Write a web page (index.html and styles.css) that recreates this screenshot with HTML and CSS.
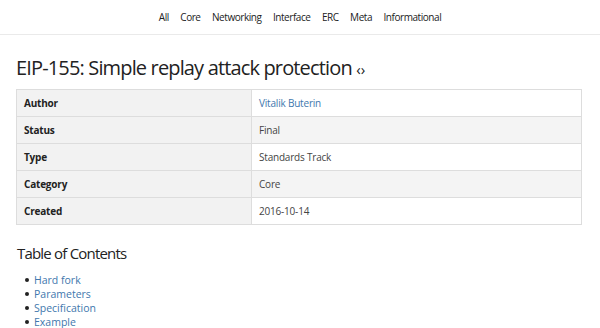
FILE: index.html
```html
<!DOCTYPE html>
<html>
<head>
<meta charset="utf-8">
<link rel="stylesheet" href="styles.css">
</head>
<body>
<header class="topnav">
  <nav class="nav">
    <a href="#">All</a>
    <a href="#">Core</a>
    <a href="#">Networking</a>
    <a href="#">Interface</a>
    <a href="#">ERC</a>
    <a href="#">Meta</a>
    <a href="#">Informational</a>
  </nav>
</header>
<main class="content">
  <h1 class="title">EIP-155: Simple replay attack protection <span class="src">‹›</span></h1>
  <table class="meta">
    <tr><th>Author</th><td><a href="#">Vitalik Buterin</a></td></tr>
    <tr class="odd"><th>Status</th><td>Final</td></tr>
    <tr><th>Type</th><td>Standards Track</td></tr>
    <tr class="odd"><th>Category</th><td>Core</td></tr>
    <tr><th>Created</th><td>2016-10-14</td></tr>
  </table>
  <h2 class="toc-title">Table of Contents</h2>
  <ul class="toc">
    <li><a href="#">Hard fork</a></li>
    <li><a href="#">Parameters</a></li>
    <li><a href="#">Specification</a></li>
    <li><a href="#">Example</a></li>
  </ul>
</main>
</body>
</html>
```
FILE: styles.css
```css
html, body { margin: 0; padding: 0; background: #fff; }
body {
  font-family: "Open Sans", "Noto Sans", sans-serif;
  color: #222;
  font-size: 11px;
}
a { color: #4177ad; text-decoration: none; }
.topnav {
  height: 34px;
  border-bottom: 1px solid #eaeaea;
  display: flex;
  justify-content: center;
  align-items: center;
}
.nav { display: flex; gap: 11.5px; }
.nav a { color: #222; font-size: 10px; letter-spacing: -0.45px; }
.content { padding: 0 17px 0 16px; }
.title {
  margin: 18px 0 0 0;
  font-size: 20px;
  letter-spacing: -0.85px;
  font-weight: 400;
  line-height: 30px;
  color: #222;
}
.src { font-size: 15px; letter-spacing: 0; }
.meta {
  width: 566px;
  margin-top: 5px;
  border-collapse: collapse;
  border: 1px solid #ddd;
  font-size: 10px;
  letter-spacing: -0.2px;
}
.meta th, .meta td {
  height: 26px;
  padding: 0 7px;
  text-align: left;
  border-top: 1px solid #ddd;
  vertical-align: middle;
}
.meta th { width: 220px; font-weight: 700; background: #f2f2f2; border-right: 1px solid #ddd; color: #222; }
.meta td { color: #444; background: #fff; }
.meta tr.odd td { background: #f4f4f4; }
.toc-title {
  margin: 17px 0 0 1px;
  font-size: 15px;
  letter-spacing: -0.8px;
  font-weight: 400;
  line-height: 22px;
}
.toc {
  margin: 9px 0 0 0;
  padding-left: 18px;
  list-style: none;
  font-size: 10.5px;
  line-height: 14px;
}
.toc li { display: flex; align-items: center; }
.toc li::before {
  content: "";
  width: 4px;
  height: 4px;
  border-radius: 50%;
  background: #222;
  margin: 0 5px 0 -9px;
}
.toc a { color: #4177ad; }
```
